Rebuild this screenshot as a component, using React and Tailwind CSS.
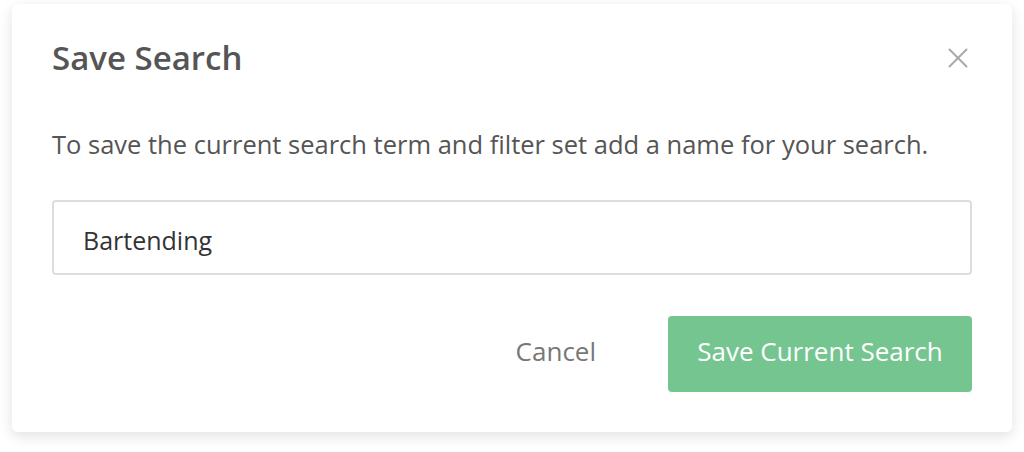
import { X } from 'lucide-react'

function App() {
  return (
    <div className="w-[1024px] h-[452px] bg-white pt-[4px] px-[12px]" style={{ fontFamily: '"Open Sans", sans-serif' }}>
      <div className="w-[1000px] h-[428px] bg-white rounded-[6px] shadow-[0_4px_14px_rgba(0,0,0,0.12)] px-[40px] pt-[34px]">
        <div className="flex items-center justify-between h-[40px]">
          <h2 className="text-[33px] leading-[40px] font-semibold text-[#555555]">Save Search</h2>
          <button className="text-[#aaaaaa] mr-[-3px]">
            <X size={34} strokeWidth={1.4} />
          </button>
        </div>
        <p className="mt-[51px] text-[25.5px] leading-[30px] text-[#555555] whitespace-nowrap">
          To save the current search term and filter set add a name for your search.
        </p>
        <div className="mt-[41px] h-[75px] border-2 border-[#dddddd] rounded-[4px] flex items-center px-[29px] pt-[6px]">
          <span className="text-[25px] text-[#333333]">Bartending</span>
        </div>
        <div className="mt-[41px] flex items-center justify-end gap-[72px]">
          <button className="text-[26px] text-[#777777] pb-[6px]">Cancel</button>
          <button className="w-[304px] h-[76px] rounded-[4px] bg-[#75c590] text-white text-[26px] pb-[6px]">
            Save Current Search
          </button>
        </div>
      </div>
    </div>
  )
}

export default App;
